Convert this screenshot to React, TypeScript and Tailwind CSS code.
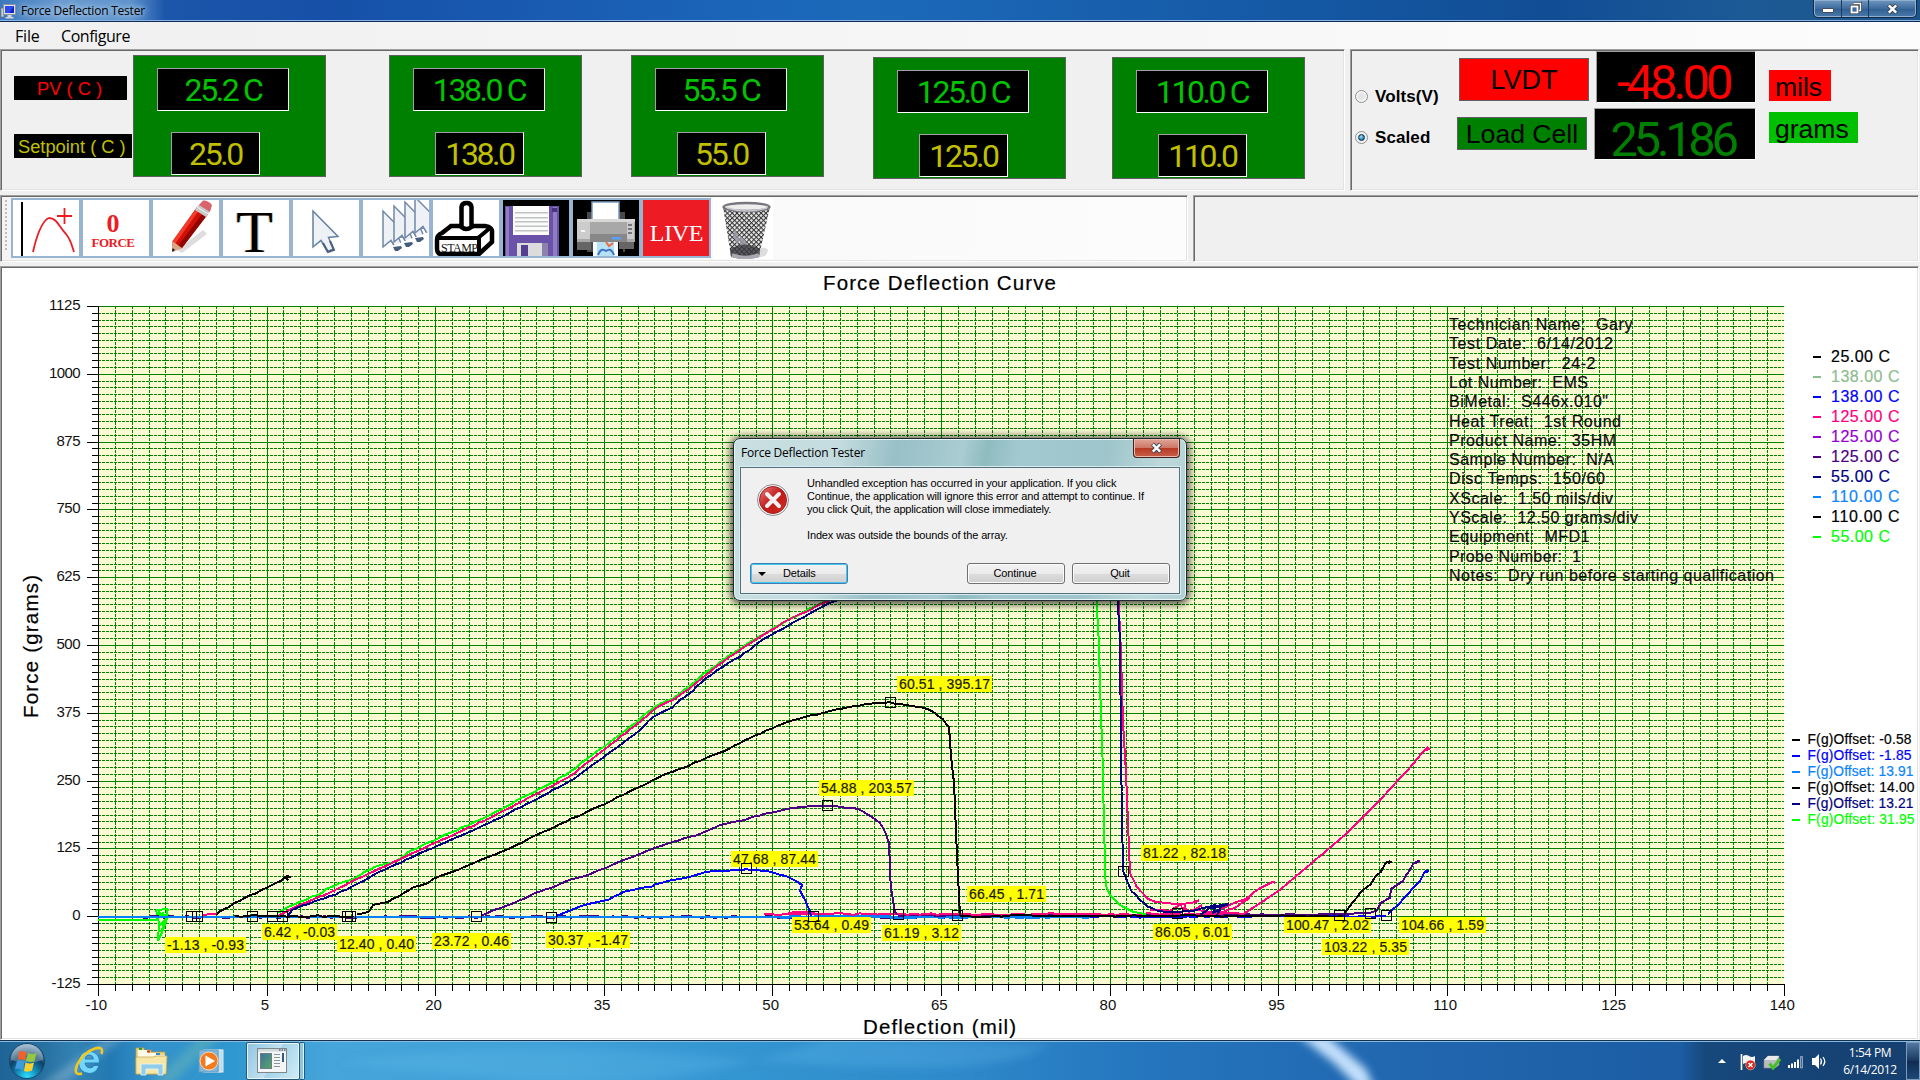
import React from "react";

type Pt = [number, number];

const SUNKEN =
  "border border-t-[#a0a0a0] border-l-[#a0a0a0] border-b-white border-r-white shadow-[inset_1px_1px_0_#696969,inset_-1px_-1px_0_#e3e3e3]";
const LCD_BOX =
  "border border-t-[#a0a0a0] border-l-[#a0a0a0] border-b-white border-r-white bg-black flex items-center justify-center";

/* ---------- Title bar and menu ---------- */

function TitleBar() {
  return (
    <div className="relative flex h-[22px] shrink-0 items-start justify-between overflow-hidden border-b border-[#122b55] bg-[linear-gradient(90deg,#3c78bc_0,#6b9bd0_60px,#5f93cc_130px,#1c56aa_165px,#1650a8_320px,#1b66b9_760px,#1c68b8_900px,#155aa6_1250px,#114d95_1550px,#1c5a96_1750px,#1d5488_1920px)] shadow-[inset_0_-1px_0_#86b4e4]">
      <div className="flex h-[21px] items-center pl-[1px]">
        <svg width="15" height="16" viewBox="0 0 15 16">
          <rect x="0" y="5" width="3" height="9" fill="#c9d0c4" stroke="#667" strokeWidth=".6" />
          <rect x="2.5" y="1.5" width="12" height="10" fill="#dfe3e8" stroke="#8a93a0" />
          <rect x="4" y="3" width="9" height="7" fill="#1423c8" />
          <path d="M4 3h9L8 10H4z" fill="#2f49ee" />
          <path d="M6.500 12h4v2h2v1.500h-8V14h2z" fill="#cfd4da" />
        </svg>
        <span className="ml-[5px] font-['Open_Sans'] text-[12px] leading-[20px] tracking-[-0.22px] text-black [text-shadow:0_0_6px_#bcd6f0,0_0_6px_#bcd6f0]">
          Force Deflection Tester
        </span>
      </div>
      <div className="mr-[3px] flex h-[18px] w-[104px] overflow-hidden rounded-b-[5px] border border-t-0 border-[#12294a] bg-[linear-gradient(180deg,#6f97bf,#3f6c9e_50%,#2f5f93_51%,#4a7bab)] shadow-[inset_0_0_0_1px_#8fb0d0]">
        <div className="flex w-[28px] items-center justify-center border-r border-[#1d3b62] pt-[3px]">
          <div className="h-[5px] w-[12px] rounded-[1px] border border-[#454b57] bg-white" />
        </div>
        <div className="flex w-[27px] items-center justify-center border-r border-[#1d3b62]">
          <svg width="13" height="13" viewBox="0 0 13 13">
            <path d="M4.500 1.500h7v7h-2" fill="none" stroke="#3b4250" strokeWidth="3" />
            <path d="M4.500 1.500h7v7h-2" fill="none" stroke="#fff" strokeWidth="1.400" />
            <rect x="2.500" y="4.500" width="6" height="6" fill="#3f6c9e" stroke="#3b4250" strokeWidth="3.200" />
            <rect x="2.500" y="4.500" width="6" height="6" fill="#3f6c9e" stroke="#fff" strokeWidth="1.800" />
          </svg>
        </div>
        <div className="flex flex-1 items-center justify-center">
          <CloseX />
        </div>
      </div>
    </div>
  );
}

function CloseX() {
  return (
    <svg width="13" height="12" viewBox="0 0 13 12">
      <path d="M2.500 2l8 8M10.500 2l-8 8" stroke="#3d4452" strokeWidth="4.200" />
      <path d="M2.800 2.300l7.400 7.400M10.200 2.300L2.800 9.700" stroke="#fff" strokeWidth="2.400" />
    </svg>
  );
}

function MenuBar() {
  return (
    <div className="flex h-[27px] shrink-0 items-center bg-[linear-gradient(90deg,#f0f0f0,#fcfcfc)] pl-[15px] pt-px font-['Open_Sans'] text-[16px] text-black">
      <span className="w-[46px] tracking-[-0.2px]">File</span>
      <span className="tracking-[-0.45px]">Configure</span>
    </div>
  );
}

/* ---------- Readouts ---------- */

function Gauge({ pv, sp, cls, spCls }: { pv: string; sp: string; cls: string; spCls: string }) {
  return (
    <div className={`h-[122px] w-[193px] shrink-0 border border-[#606060] bg-[#008000] pt-[12px] ${cls}`}>
      <div className={`ml-[23px] h-[43px] w-[132px] ${LCD_BOX}`}>
        <span className="whitespace-nowrap font-[Roboto] text-[32px] leading-none tracking-[-2.4px] text-[#00c400]">{pv}</span>
      </div>
      <div className={`mt-[21px] h-[43px] w-[89px] ${LCD_BOX} ${spCls}`}>
        <span className="font-[Roboto] text-[32px] leading-none tracking-[-2.4px] text-[#c0c000]">{sp}</span>
      </div>
    </div>
  );
}

function Radio({ label, on }: { label: string; on?: boolean }) {
  return (
    <div className="flex h-[20px] items-center">
      <div className="flex h-[13px] w-[13px] items-center justify-center rounded-full border border-[#8e8f8f] bg-[radial-gradient(circle,#e4e4e4_30%,#fbfbfb_80%)] shadow-[inset_0_0_0_1px_#f4f4f4]">
        {on && <div className="h-[7px] w-[7px] rounded-full border border-[#0b3350] bg-[radial-gradient(circle_at_40%_35%,#a8e2f8,#1c78b0_70%)]" />}
      </div>
      <span className="ml-[7px] pt-px font-['Liberation_Sans'] text-[17px] font-bold leading-[20px] tracking-[0.1px] text-black">{label}</span>
    </div>
  );
}

function ReadoutRow() {
  return (
    <div className="flex h-[142px] shrink-0 gap-[5px]">
      <div className={`flex w-[1345px] bg-[#f0f0f0] ${SUNKEN}`}>
        <div className="w-[132px] pl-[13px] pt-[26px] font-['Liberation_Sans'] text-[18.3px]">
          <div className="h-[24px] w-[113px] bg-black pl-[23px] leading-[25px] text-[#ff0000]">PV ( C )</div>
          <div className="mt-[34px] h-[24px] w-[118px] whitespace-nowrap bg-black pl-[4px] leading-[25px] text-[#c0c000]">Setpoint ( C )</div>
        </div>
        <Gauge pv="25.2 C" sp="25.0" cls="mt-[5px]" spCls="ml-[37px]" />
        <Gauge pv="138.0 C" sp="138.0" cls="mt-[5px] ml-[63px]" spCls="ml-[45px]" />
        <Gauge pv="55.5 C" sp="55.0" cls="mt-[5px] ml-[49px]" spCls="ml-[45px]" />
        <Gauge pv="125.0 C" sp="125.0" cls="mt-[7px] ml-[49px]" spCls="ml-[45px]" />
        <Gauge pv="110.0 C" sp="110.0" cls="mt-[7px] ml-[46px]" spCls="ml-[45px]" />
      </div>
      <div className={`flex w-[569px] bg-[#f0f0f0] ${SUNKEN}`}>
        <div className="flex w-[106px] flex-col gap-[21px] pl-[4px] pt-[36px]">
          <Radio label="Volts(V)" />
          <Radio label="Scaled" on />
        </div>
        <div className="flex w-[132px] flex-col gap-[16px] pt-[8px] font-['Liberation_Sans'] text-[27px] text-black">
          <div className="ml-[2px] flex h-[43px] w-[130px] items-center justify-center border border-[#606060] bg-[#ff0000] pt-[2px]">LVDT</div>
          <div className="flex h-[33px] w-[130px] items-center justify-center border border-[#606060] bg-[#008000] pt-[3px] text-[26.6px]">Load Cell</div>
        </div>
        <div className="ml-[5px] flex w-[162px] flex-col items-end gap-[5px] pt-px">
          <div className={`h-[52px] w-[160px] ${LCD_BOX}`}>
            <span className="mt-[11px] pr-[5px] font-[Roboto] text-[49px] leading-none tracking-[-4px] text-[#ff0000]">-48.00</span>
          </div>
          <div className={`h-[52px] w-[162px] ${LCD_BOX}`}>
            <span className="mt-[11px] pr-[5px] font-[Roboto] text-[49px] leading-none tracking-[-4.4px] text-[#008000]">25.186</span>
          </div>
        </div>
        <div className="ml-[13px] flex flex-col items-start gap-[11px] pt-[20px] font-['Liberation_Sans'] text-[26.5px] leading-[34px]">
          <div className="h-[31px] w-[62px] bg-[#ff0000] pl-[6px]">mils</div>
          <div className="h-[31px] w-[89px] bg-[#00c000] pl-[6px]">grams</div>
        </div>
      </div>
    </div>
  );
}

/* ---------- Toolbar ---------- */

function ToolButton({ children, bg = "bg-white" }: { children: React.ReactNode; bg?: string }) {
  return <div className={`h-[60px] w-[70px] shrink-0 border-2 border-[#99b4d1] ${bg}`}>{children}</div>;
}

const ARROW = "M0 0L0 36L8 29.500L14.500 40.500L20.500 38L15.500 26.500L25 25.500Z";

function CurveIcon() {
  return (
    <svg width="66" height="56" viewBox="0 0 66 56">
      <path d="M9 2v54" stroke="#000" strokeWidth="2" />
      <path d="M20 52C23 38 29 20 36 18C44 18 46 27 53 34C58 40 59 46 61 52" fill="none" stroke="#ed1c24" strokeWidth="1.800" />
      <path d="M44 16h15M51.500 8v16" stroke="#ed1c24" strokeWidth="1.800" />
    </svg>
  );
}

function PencilIcon() {
  return (
    <svg width="66" height="56" viewBox="0 0 66 56">
      <path d="M24 50L50 30L54 34L29 53z" fill="#ddd" />
      <path d="M20 51L19 42L44 7L55 14L29 48z" fill="#d01008" />
      <path d="M19 42L44 7L47 9L22 44z" fill="#f43a2a" />
      <path d="M25 46L51 11.500L55 14L29 48z" fill="#8f0500" />
      <path d="M19 41L29 48L20 52z" fill="#d9a987" />
      <path d="M19.500 48L22 50L19 52z" fill="#111" />
      <path d="M42 10L46 4L57 11L53 17z" fill="#c9c9c9" />
      <path d="M46 5L50 0.500Q55 0 59 5L57 12z" fill="#d9656c" />
      <path d="M44 7L55 14" stroke="#f4f4f4" />
    </svg>
  );
}

function PointerIcon() {
  return (
    <svg width="66" height="56" viewBox="0 0 66 56">
      <path d={ARROW} transform="translate(20 11)" fill="#eef1f6" stroke="#66809f" strokeWidth="1.500" />
      <path d="M30 43l5 9l6-2l-4-9" fill="none" stroke="#49607f" strokeWidth="2" />
    </svg>
  );
}

function MultiPointerIcon() {
  return (
    <svg width="66" height="56" viewBox="0 0 66 56">
      {[[20, 11], [31, 6], [42, 2], [52, -3]].map(([x, y], i) => (
        <g key={i}>
          <path d={ARROW} transform={`translate(${x} ${y})`} fill="#eef1f6" stroke="#7188a6" strokeWidth="1.500" />
        </g>
      ))}
      <path d="M26 47L66 32V56H26z" fill="#fff" />
      {[[30, 47], [41, 43], [52, 38]].map(([x, y], i) => (
        <path key={i} d={`M${x} ${y}l2 4h3l4-3l-1-2z`} fill="#465c7c" />
      ))}
    </svg>
  );
}

function StampIcon() {
  return (
    <svg width="66" height="56" viewBox="0 0 66 56">
      <path d="M4 40Q4 35 9 33L18 26H52Q60 27 59 33V42L46 54H8Q4 54 4 48z" fill="#fff" stroke="#000" strokeWidth="4.500" />
      <path d="M5 38H45L57 28M46 38V54" fill="none" stroke="#000" strokeWidth="4" />
      <path d="M28.500 27V7Q29 3 33.500 3Q38 3 38.500 7V27Q33 31 28.500 27z" fill="#fff" stroke="#000" strokeWidth="4.500" />
      <text x="8" y="52" fontFamily="Liberation Serif" fontSize="12" textLength="37" fill="#111">STAMP</text>
    </svg>
  );
}

function FloppyIcon() {
  return (
    <svg width="66" height="56" viewBox="0 0 66 56">
      <path d="M2 6H56V56H2z" fill="#6a52a8" />
      <path d="M3 7H6V56H3zM50 7h4V56h-4z" fill="#8f7cc4" />
      <path d="M49 8h5v4h-5z" fill="#473580" />
      <rect x="10" y="6" width="36" height="29" fill="#fbfbfb" />
      {[12, 17, 21, 25.5, 30].map((y) => <rect key={y} x="12" y={y} width="33" height="1.500" fill="#bfc3c3" />)}
      <path d="M14 43h31v13H14z" fill="#dcdcdc" />
      <path d="M39 43h6v13h-6z" fill="#8c81ac" />
      <rect x="18" y="45" width="7" height="11" fill="#54408f" />
    </svg>
  );
}

function PrinterIcon() {
  return (
    <svg width="66" height="56" viewBox="0 0 66 56">
      <path d="M14 12h38v40H14z" fill="#4a4a4a" />
      <path d="M20 40h30v16H20z" fill="#000" />
      <path d="M4 34h14v16H4zM46 34h15v15H46z" fill="#666" />
      <path d="M19 2h27v20H19z" fill="#fff" stroke="#7a9ac0" strokeWidth="1.500" />
      <path d="M4 19h58v23H4z" fill="#a8a8a8" />
      <path d="M4 19h58v3H4z" fill="#d8d8d8" />
      <path d="M4 22h13v17H4zM54 22h7v17h-7z" fill="#ccc" />
      <path d="M17 34h37v8H17z" fill="#888" />
      <path d="M39 37h9v2.500h-9z" fill="#5aa0ff" />
      {[24, 28, 32].map((y) => <rect key={y} x="55" y={y} width="4" height="2" fill="#777" />)}
      <rect x="8" y="30" width="4" height="2" fill="#f6f6f6" />
      <path d="M20 42h25v14H20z" fill="#f5faff" />
      <path d="M24 42h17v14H24z" fill="#b6e2f6" />
      <path d="M33 42l3 4l4-3" fill="none" stroke="#f06a3c" strokeWidth="2" />
      <path d="M25 55q3-8 8-4q5-4 8 4" fill="none" stroke="#3e74c8" strokeWidth="2" />
    </svg>
  );
}

function TrashIcon() {
  return (
    <svg width="60" height="61" viewBox="0 0 60 61">
      <defs>
        <pattern id="mesh" width="3.400" height="3.400" patternUnits="userSpaceOnUse" patternTransform="rotate(45)">
          <rect width="3.400" height="3.400" fill="#ececec" />
          <path d="M0 0h3.400M0 0v3.400" stroke="#333" strokeWidth="2" />
        </pattern>
      </defs>
      <path d="M46 50q14-2 6 8l-8 2z" fill="#ddd" />
      <path d="M10 9Q34 17 57 9L46 58Q32 63 18 58z" fill="url(#mesh)" />
      <path d="M22 30l5 12l-3 4l-4-8zM27 37l6 6l2 8l-8-3z" fill="#9a9aa4" opacity=".85" />
      <path d="M17 51Q32 42 47 51L46 59Q32 63 18 59z" fill="#3a3a3e" opacity=".8" />
      <path d="M19 57Q32 62 46 57" fill="none" stroke="#a8a8b2" strokeWidth="3.500" />
      <ellipse cx="33.500" cy="9" rx="23" ry="4" fill="#eee" stroke="#77777f" strokeWidth="2.400" />
      <path d="M14 10Q33 16 54 10" stroke="#c8c8d0" strokeWidth="1.500" fill="none" />
    </svg>
  );
}

function ToolRow() {
  return (
    <div className="mt-[4px] flex h-[67px] shrink-0 gap-[5px]">
      <div className={`flex w-[1188px] items-start bg-[linear-gradient(90deg,#f4f4f4,#fcfcfc)] pl-[4px] pt-[2px] ${SUNKEN}`}>
        <div className="mr-[4px] mt-[2px] flex w-[2px] flex-col gap-[2px]">
          {Array.from({ length: 13 }, (_, i) => <div key={i} className="h-[2px] w-[2px] bg-[#bdbdbd]" />)}
        </div>
        <ToolButton><CurveIcon /></ToolButton>
        <ToolButton>
          <div className="flex flex-col items-center pr-[6px] pt-[11px] font-['Liberation_Serif'] font-bold text-[#ed1c24]">
            <span className="text-[26px] leading-[25px]">0</span>
            <span className="text-[13px] leading-[14px] tracking-[-0.5px]">FORCE</span>
          </div>
        </ToolButton>
        <ToolButton><PencilIcon /></ToolButton>
        <ToolButton>
          <div className="flex justify-center pr-[3px] font-['Liberation_Serif'] text-[60px] leading-[64px] text-black [text-shadow:-1px_0_0_#f9b26a,1px_0_0_#7cc4f8]">T</div>
        </ToolButton>
        <ToolButton><PointerIcon /></ToolButton>
        <ToolButton><MultiPointerIcon /></ToolButton>
        <ToolButton><StampIcon /></ToolButton>
        <ToolButton bg="bg-black"><FloppyIcon /></ToolButton>
        <ToolButton bg="bg-black"><PrinterIcon /></ToolButton>
        <ToolButton bg="bg-[#ed1c24]">
          <div className="pl-px pt-[17px] text-center font-['Liberation_Serif'] text-[24px] leading-[33px] tracking-[-0.3px] text-white">LIVE</div>
        </ToolButton>
        <div className="ml-[2px] h-[61px] w-[60px] bg-white"><TrashIcon /></div>
      </div>
      <div className={`w-[726px] bg-[#f0f0f0] ${SUNKEN}`} />
    </div>
  );
}

/* ---------- Chart ---------- */

const SX = 11.24;
const SY = 0.5424;
const px = (v: number) => 98 + (v + 10) * SX;
const py = (v: number) => 984 - (v + 125) * SY;

// Breaks each segment into short steps with a small deterministic sensor jitter.
function rough(points: Pt[], amp = 0.8, step = 6): string {
  let seed = points.length * 37 + Math.round(points[0][0]);
  const rnd = () => {
    seed = (seed * 1103515245 + 12345) & 0x7fffffff;
    return (seed / 0x7fffffff - 0.5) * 2 * amp;
  };
  const out: string[] = [];
  for (let i = 0; i < points.length - 1; i++) {
    const [x0, y0] = points[i];
    const [x1, y1] = points[i + 1];
    const n = Math.max(1, Math.round(Math.hypot(x1 - x0, y1 - y0) / step));
    const steep = Math.abs(y1 - y0) > Math.abs(x1 - x0) * 2;
    for (let k = 0; k < n; k++) {
      const t = k / n;
      const j = k === 0 || steep ? 0 : rnd();
      out.push(`${(x0 + (x1 - x0) * t).toFixed(1)},${(y0 + (y1 - y0) * t + j).toFixed(1)}`);
    }
  }
  out.push(points[points.length - 1].join(","));
  return out.join(" ");
}

interface Curve { color: string; pts: Pt[]; w?: number; amp?: number }

const CURVES: Curve[] = [
  { color: "#00ff00", pts: [[98, 920], [157, 920]], amp: 0 },
  { color: "#00ff00", amp: 0, pts: [[157, 920], [159, 910], [161, 918], [163, 912], [165, 919], [168, 909], [156, 910], [159, 923], [158, 941], [164, 928], [167, 918], [160, 925], [166, 921], [161, 932], [168, 914]] },
  { color: "#4b0082", pts: [[140, 917], [900, 917]], amp: 1.2 },
  { color: "#0080ff", pts: [[98, 917], [964, 917]], amp: 0.3 },
  { color: "#ff0080", pts: [[203, 915], [217, 914]], amp: 1.4 },
  { color: "#000000", pts: [[235, 916], [354, 916.500]], amp: 1.2 },
  { color: "#0000ff", pts: [[780, 918], [1386, 916]], amp: 0.8 },
  { color: "#0080ff", pts: [[780, 917], [1090, 917]], amp: 0.4, w: 3 },
  { color: "#4b0082", pts: [[898, 915.500], [1310, 914.500], [1340, 914], [1370, 912.700], [1376, 911]], amp: 0.5 },
  { color: "#ff0080", pts: [[764, 914], [1243, 914]], amp: 0.9 },
  { color: "#ff0080", pts: [[785, 914], [800, 911.500], [815, 913]], amp: 0.5 },
  { color: "#000000", pts: [[960, 916], [1343, 916]], amp: 0.8 },
  { color: "#000000", pts: [[217, 915], [219, 911.700], [245, 897.700], [267, 887.700], [281, 881], [285, 877], [288, 880], [286, 876], [291, 877]] },
  { color: "#000000", pts: [[357, 914], [369, 911.700], [373, 905], [388, 902], [404, 892.700], [414, 887], [428, 883], [433, 879], [453, 871.700], [465, 866.700], [486, 858], [506, 850], [560, 824], [600, 806], [640, 786.700], [653, 780], [663, 775], [683, 768], [706, 758], [723, 751.700], [740, 743], [756, 735], [771, 729], [790, 721], [806, 716.700], [823, 713], [840, 709], [866, 704], [890, 702.300], [906, 705], [923, 707.700], [933, 711.700], [943, 719], [949, 727], [951, 756], [954, 783], [957, 856], [960, 916]], amp: 0.6 },
  { color: "#4b0082", pts: [[481, 915.700], [494, 910], [504, 906.700], [518, 901], [535, 893], [551, 888], [569, 880], [588, 875], [612, 865], [640, 854], [653, 848.700], [673, 841.700], [700, 834], [720, 825], [740, 821], [753, 816.700], [770, 813], [783, 810], [800, 807], [816, 805.700], [840, 806.700], [858, 809], [870, 816], [880, 823], [885, 831.700], [889, 843], [890.700, 886.700], [895, 911.700], [897, 915]], amp: 0.5 },
  { color: "#0000ff", pts: [[557, 915.700], [569, 911], [588, 904], [608, 900], [624, 891.700], [640, 888.300], [651, 887], [656, 884], [673, 880], [690, 876.700], [706, 872], [726, 871], [746, 869.300], [766, 870.700], [786, 876], [796, 881], [802, 885], [800, 890.700], [805, 900], [810, 911.700], [811, 916]], amp: 0.5 },
  { color: "#00ff00", pts: [[277, 913], [300, 901.700], [318, 895], [326, 889], [351, 880], [375, 866.700], [392, 863], [412, 850], [490, 815], [566, 775], [640, 719], [656, 706], [673, 698.500], [690, 686], [706, 672], [723, 660], [740, 649], [755, 639], [786, 621], [830, 598]], amp: 0.9 },
  { color: "#ff0080", pts: [[279, 915], [302, 904], [334, 890.700], [359, 878], [384, 866.700], [420, 850], [490, 818], [569, 777], [640, 721.700], [656, 708], [673, 700], [690, 688], [706, 675], [723, 661.700], [740, 650], [755, 640], [788, 620], [834, 598]], amp: 0.5 },
  { color: "#000080", pts: [[288, 916], [292, 910], [318, 900], [335, 895], [359, 883], [384, 870], [428, 850], [500, 818], [574, 779], [640, 730], [653, 717], [672, 707.700], [680, 700], [693, 690.700], [706, 678], [723, 666.700], [740, 656.700], [762, 640], [798, 620], [820, 608], [842, 598]], amp: 0.6 },
  { color: "#00ff00", amp: 0.3, pts: [[1096, 590], [1098.700, 640], [1100.700, 706], [1102.700, 763], [1104, 826], [1105.700, 885], [1110, 895], [1120, 905], [1133, 911.700], [1146, 914]] },
  { color: "#ff0080", amp: 0.5, pts: [[1118, 590], [1120.700, 646], [1123, 723], [1126, 773], [1128, 823], [1130, 873], [1136.700, 886.700], [1146.700, 898], [1156, 902], [1180, 904], [1192, 903], [1199, 900], [1195, 903]] },
  { color: "#ff0080", amp: 1, pts: [[1150, 910], [1170, 911], [1184, 904], [1186, 909], [1181, 907], [1190, 911], [1202, 905], [1196, 909], [1213, 911.700], [1230, 905], [1243, 900], [1253, 893], [1263, 886.700], [1273, 881.700], [1275, 883]] },
  { color: "#ff0080", amp: 0.6, pts: [[1213, 914], [1235, 908], [1250, 898]] },
  { color: "#000080", amp: 0.5, pts: [[1117, 590], [1120, 640], [1121, 750], [1122, 826], [1123.300, 871.700], [1128, 883], [1131.700, 891.700], [1135, 894], [1140, 900], [1148, 906.700], [1158, 911], [1176, 912.300], [1193, 911], [1213, 906], [1228, 904.300]] },
  { color: "#000080", amp: 1, pts: [[1200, 915], [1206, 911], [1211, 906], [1216, 905], [1213, 913], [1220, 909], [1217, 915], [1222, 905], [1229, 904], [1210, 908]] },
  { color: "#ff0080", amp: 0.3, pts: [[1243, 914], [1253, 907.700], [1280, 890], [1313, 862], [1346, 834], [1380, 800], [1413, 764], [1423, 751.700], [1428, 747], [1426, 750], [1430, 749]] },
  { color: "#000000", amp: 0.5, pts: [[1345, 912.700], [1361, 891.700], [1371, 884], [1375, 877], [1381, 871.700], [1386, 862.700], [1390, 861], [1388, 863], [1392, 862]] },
  { color: "#4b0082", amp: 0.5, pts: [[1376, 911.700], [1381, 903], [1390, 897.700], [1391, 889], [1403, 881], [1413, 864], [1418, 861], [1416, 863], [1420, 860.700]] },
  { color: "#0000ff", amp: 0.5, pts: [[1388, 914], [1400, 903], [1413, 887.700], [1420, 881], [1425, 871.700], [1428, 870], [1426, 872], [1429, 871]] },
];

const MARKERS: Pt[] = [
  [191, 916.500], [197, 916.500], [252.500, 916.500], [272.500, 916.500], [282.500, 916.500], [347.500, 916.500], [350, 916.500],
  [476.500, 916.500], [551.500, 917.500], [746.500, 868.500], [827.500, 805.500], [813.500, 916.500], [898.500, 914.500], [890.500, 702.500],
  [957.500, 915.500], [1123.500, 871.500], [1177.500, 913.500], [1339.500, 915.500], [1370.500, 913.500], [1386.500, 915.500],
];

const TAGS: [string, number, number, number][] = [
  ["-1.13 , -0.93", 165, 937, 81],
  ["6.42 , -0.03", 262, 924, 75],
  ["12.40 , 0.40", 337, 936, 79],
  ["23.72 , 0.46", 432, 933, 79],
  ["30.37 , -1.47", 546, 932, 84],
  ["60.51 , 395.17", 897, 676, 95],
  ["54.88 , 203.57", 819, 780, 95],
  ["47.68 , 87.44", 731, 851, 87],
  ["53.64 , 0.49", 792, 917, 79],
  ["61.19 , 3.12", 882, 925, 79],
  ["66.45 , 1.71", 967, 886, 79],
  ["81.22 , 82.18", 1141, 845, 87],
  ["86.05 , 6.01", 1153, 924, 79],
  ["100.47 , 2.02", 1284, 917, 87],
  ["103.22 , 5.35", 1322, 939, 87],
  ["104.66 , 1.59", 1399, 917, 87],
];

const INFO: [string, number][] = [
  ["Technician Name:\u00a0 Gary", 183.5],
  ["Test Date:\u00a0 6/14/2012", 164],
  ["Test Number:\u00a0 24-2", 146.500],
  ["Lot Number:\u00a0 EMS", 139],
  ["BiMetal:\u00a0 S446x.010\"", 159],
  ["Heat Treat:\u00a0 1st Round", 172],
  ["Product Name:\u00a0 35HM", 167],
  ["Sample Number:\u00a0 N/A", 165],
  ["Disc Temps:\u00a0 150/60", 156],
  ["XScale:\u00a0 1.50 mils/div", 164],
  ["YScale:\u00a0 12.50 grams/div", 189],
  ["Equipment:\u00a0 MFD1", 140.500],
  ["Probe Number:\u00a0 1", 132],
  ["Notes:\u00a0 Dry run before starting qualification", 325],
];

const LEGEND: [string, string][] = [
  ["25.00 C", "#000000"],
  ["138.00 C", "#8fbc8f"],
  ["138.00 C", "#0000ff"],
  ["125.00 C", "#ff0080"],
  ["125.00 C", "#9400d3"],
  ["125.00 C", "#4b0082"],
  ["55.00 C", "#000080"],
  ["110.00 C", "#0a84ff"],
  ["110.00 C", "#000000"],
  ["55.00 C", "#00ff00"],
];

const OFFSETS: [string, string, number][] = [
  ["F(g)Offset: -0.58", "#000000", 104],
  ["F(g)Offset: -1.85", "#0000ff", 104],
  ["F(g)Offset: 13.91", "#0a84ff", 106],
  ["F(g)Offset: 14.00", "#000000", 107],
  ["F(g)Offset: 13.21", "#000080", 106],
  ["F(g)Offset: 31.95", "#00ff00", 107],
];

function Chart() {
  const cols = Array.from({ length: 100 }, (_, i) => i);
  const rows = Array.from({ length: 101 }, (_, i) => i);
  return (
    <div className={`mt-[4px] h-[774px] w-[1919px] shrink-0 bg-white p-px ${SUNKEN}`}>
      <svg width="1915" height="770" viewBox="2 268 1915 770" fontFamily="Liberation Sans" className="block">
        <rect x="98" y="306" width="1686" height="678" fill="#fafad2" />
        <g stroke="#008000" strokeWidth="1" shapeRendering="crispEdges">
          {cols.map((i) => {
            const x = Math.round(px(-10 + i * 1.5)) + 0.5;
            return <line key={i} x1={x} x2={x} y1="306" y2="984" strokeDasharray={i % 10 ? "3 1" : undefined} />;
          })}
          {rows.map((i) => {
            const y = Math.round(py(1125 - i * 12.5)) + 0.5;
            return <line key={i} x1="98" x2="1784" y1={y} y2={y} strokeDasharray={i % 10 ? "3 1" : undefined} />;
          })}
        </g>
        <g stroke="#000" strokeWidth="1" shapeRendering="crispEdges">
          <path d="M98.500 306V984M98 984.500H1785" />
          {Array.from({ length: 101 }, (_, i) => {
            const x = Math.round(px(-10 + i * 1.5)) + 0.5;
            const y = Math.round(py(1125 - i * 12.5)) + 0.5;
            return (
              <g key={i}>
                <line x1={x} x2={x} y1="984" y2={i % 10 ? 991 : 996} />
                <line y1={y} y2={y} x1={i % 10 ? 92 : 87} x2="98" />
              </g>
            );
          })}
        </g>
        <g fill="#111" fontSize="15">
          {Array.from({ length: 11 }, (_, i) => (
            <g key={i}>
              <text x="80.500" y={Math.round(py(1125 - i * 125)) + 4} textAnchor="end" textLength={[31.5, 31.5, 24, 24, 24, 24, 24, 24, 24, 7.8, 29][i]}>{1125 - i * 125}</text>
              <text x={px(-10 + i * 15) - 1.7} y="1010" textAnchor="middle">{-10 + i * 15}</text>
            </g>
          ))}
        </g>
        <g fill="#000" stroke="#000" strokeWidth=".2" fontSize="20.500">
          <text x="823" y="289.500" textLength="233">Force Deflection Curve</text>
          <text x="863" y="1034" textLength="153">Deflection (mil)</text>
          <text transform="translate(37.500 718) rotate(-90)" textLength="143">Force (grams)</text>
        </g>
        <g fill="none" strokeWidth="2" strokeLinejoin="bevel" shapeRendering="crispEdges">
          {CURVES.map((c, i) => (
            <polyline key={i} points={rough(c.pts, c.amp ?? 0.7)} stroke={c.color} strokeWidth={c.w} />
          ))}
        </g>
        <g fontSize="14">
          {TAGS.map(([t, x, y, w]) => (
            <g key={t}>
              <rect x={x} y={y} width={w} height="16" fill="#ffff00" />
              <text x={x + 2} y={y + 12.5} textLength={w - 4} fill="#1a1a00" stroke="#1a1a00" strokeWidth=".2">{t}</text>
            </g>
          ))}
        </g>
        <g fill="none" stroke="#000" shapeRendering="crispEdges">
          {MARKERS.map(([x, y], i) => <rect key={i} x={x - 5} y={y - 5} width="10" height="10" />)}
        </g>
        <g fontSize="16" fill="#0a0a0a" stroke="#0a0a0a" strokeWidth=".2">
          {INFO.map(([t, w], i) => <text key={i} x="1449" y={330 + i * 19.3} textLength={w}>{t}</text>)}
        </g>
        <g fontSize="16" strokeWidth=".2">
          {LEGEND.map(([t, c], i) => (
            <g key={i} fill={c} stroke={c}>
              <rect x="1813" y={356 + i * 20} width="8" height="2" stroke="none" />
              <text x="1831" y={362 + i * 20} textLength={t.length > 7 ? 68.5 : 59}>{t}</text>
            </g>
          ))}
        </g>
        <g fontSize="13.800" strokeWidth=".2">
          {OFFSETS.map(([t, c, w], i) => (
            <g key={i} fill={c} stroke={c}>
              <rect x="1792" y={739 + i * 16} width="8" height="2" stroke="none" />
              <text x="1807.500" y={744 + i * 16} textLength={w}>{t}</text>
            </g>
          ))}
        </g>
      </svg>
    </div>
  );
}

/* ---------- Error dialog ---------- */

function DialogButton({ label, focus }: { label: string; focus?: boolean }) {
  return (
    <div
      className={`flex h-[21px] w-[98px] items-center rounded-[3px] border bg-[linear-gradient(180deg,#f2f2f2,#ebebeb_50%,#dddddd_51%,#cfcfcf)] ${
        focus ? "border-[#3c7fb1] shadow-[inset_0_0_0_1px_#48c4f0]" : "border-[#707070] shadow-[inset_0_0_0_1px_#fcfcfc]"
      }`}
    >
      {focus && <div className="ml-[7px] h-0 w-0 border-x-[4px] border-t-[4px] border-x-transparent border-t-black" />}
      <span className={`text-[11px] tracking-[-0.15px] ${focus ? "ml-[17px]" : "flex-1 pr-[2px] text-center"}`}>{label}</span>
    </div>
  );
}

function ErrorDialog() {
  return (
    <div className="absolute left-[733px] top-[438px] flex h-[163px] w-[454px] flex-col rounded-[7px] border border-[#1d2b30] bg-[linear-gradient(100deg,#c9dfe2_0,#c4dcdf_22%,#98c0c6_34%,#a8ccd2_48%,#8fbcbf_53%,#a3c9d0_60%,#9dc5ca_78%,#bcd8db_90%,#b0d0d4)] pb-[6px] shadow-[inset_0_0_0_1px_#e6f4f6,0_1px_9px_2px_rgba(0,0,0,.75)]">
      <div className="flex h-[28px] shrink-0 items-start justify-between pl-[7px] pr-[6px]">
        <span className="font-['Open_Sans'] text-[12px] leading-[28px] tracking-[-0.22px] text-black">Force Deflection Tester</span>
        <div className="flex h-[19px] w-[47px] items-center justify-center rounded-b-[4px] border border-t-0 border-[#43201c] bg-[linear-gradient(180deg,#dfa79b,#cf7766_48%,#b83a24_52%,#c7604a)] shadow-[inset_0_0_0_1px_#e9b9ae]">
          <CloseX />
        </div>
      </div>
      <div className="mx-[6px] flex flex-1 flex-col border border-[#54707a] bg-[#f0f0f0] font-['Liberation_Sans'] text-[11px] leading-[13px] text-black shadow-[0_0_0_1px_#d8ecef]">
        <div className="flex">
          <svg className="ml-[16px] mt-[16px] shrink-0" width="32" height="32" viewBox="0 0 32 32">
            <defs>
              <linearGradient id="err" x1="0" y1="0" x2="1" y2="1">
                <stop offset="0" stopColor="#e98080" />
                <stop offset=".5" stopColor="#c01818" />
                <stop offset="1" stopColor="#d83020" />
              </linearGradient>
            </defs>
            <circle cx="16" cy="16" r="15.500" fill="#fafafa" stroke="#8d8d8d" />
            <circle cx="16" cy="16" r="13.500" fill="url(#err)" stroke="#a02020" />
            <path d="M10 10l12 12M22 10L10 22" stroke="#f2f2f2" strokeWidth="4" strokeLinecap="round" />
          </svg>
          <div className="ml-[18px] mt-[9px] whitespace-nowrap">
            <p className="tracking-[-0.15px]">Unhandled exception has occurred in your application. If you click</p>
            <p className="tracking-[-0.17px]">Continue, the application will ignore this error and attempt to continue. If</p>
            <p className="tracking-[-0.17px]">you click Quit, the application will close immediately.</p>
            <p className="mt-[13px] tracking-[-0.14px]">Index was outside the bounds of the array.</p>
          </div>
        </div>
        <div className="mt-auto flex justify-between pb-[9px] pl-[9px] pr-[9px]">
          <DialogButton label="Details" focus />
          <div className="flex gap-[7px]">
            <DialogButton label="Continue" />
            <DialogButton label="Quit" />
          </div>
        </div>
      </div>
    </div>
  );
}

/* ---------- Taskbar ---------- */

function StartOrb() {
  return (
    <svg width="38" height="38" viewBox="0 0 38 38">
      <defs>
        <radialGradient id="orb" cx=".5" cy=".95" r=".9">
          <stop offset="0" stopColor="#2ce0ff" />
          <stop offset=".35" stopColor="#1387b4" />
          <stop offset=".65" stopColor="#0c4066" />
          <stop offset="1" stopColor="#7fa4bd" />
        </radialGradient>
      </defs>
      <circle cx="19" cy="19" r="17.500" fill="url(#orb)" stroke="#17466b" />
      <path d="M3 18A16 16 0 0 1 35 18Q19 23 3 18z" fill="#fff" opacity=".28" />
      <path d="M11 9.500q4-1.500 7.500 1L17 18.500q-3-2-7-1z" fill="#f0622a" />
      <path d="M20 11q4 2 8.500 0L26.500 19q-4 2-8.500-.5z" fill="#92c83e" />
      <path d="M9 19q4-1.500 7.500 1L15 28q-3-2-8-1z" fill="#3f9ae0" />
      <path d="M17.500 20.500q4 2 8.500 0L24 28.500q-4 2-8 .5z" fill="#fcd02e" />
    </svg>
  );
}

function IeIcon() {
  return (
    <svg width="30" height="32" viewBox="0 0 30 32">
      <path d="M25.500 18H11q.8 4.800 5 4.800q3 0 4-2.300h5q-2.500 8-10 8Q5 27.500 4.500 17.500Q5 6.500 15 6Q26 7 25.500 18zM11 14H19.500q-.8-4-4.300-4t-4.200 4z" fill="#74d6fa" stroke="#2380bd" strokeWidth="1" />
      <path d="M27.500 9Q30 1 21 3.500Q9 7.500 3 20Q-1 31 8 28.500" fill="none" stroke="#f2c81c" strokeWidth="2.600" />
    </svg>
  );
}

function FolderIcon() {
  return (
    <svg width="34" height="32" viewBox="0 0 34 32">
      <path d="M2 3h8v2h7v2h14v22H2z" fill="#eed584" stroke="#b99a47" strokeWidth=".8" />
      <path d="M4 5h10v3h9v2h8v5H4z" fill="#fffbe8" />
      <path d="M5 3h3v2H5z" fill="#24a02c" />
      <path d="M13 5.500h3v2h-3z" fill="#d03b26" />
      <path d="M22 8h4v2h-4z" fill="#2b8fd8" />
      <path d="M2 12h17l3 -1h11l-1 18H2z" fill="#f7e7a6" stroke="#c9ac58" strokeWidth=".8" />
      <path d="M7 30V19h22v11h-5v-6H12v6z" fill="#8fcdea" stroke="#e9f8ff" strokeWidth=".8" />
    </svg>
  );
}

function PlayerIcon() {
  return (
    <svg width="30" height="28" viewBox="0 0 30 28">
      <rect x="8" y="3" width="17" height="22" fill="#b9d8ea" stroke="#e0f0f8" />
      <rect x="5" y="3" width="17" height="22" fill="#a8cde4" stroke="#dceef8" />
      <rect x="1" y="3" width="19" height="22" fill="#7fb6da" stroke="#5c9cc6" />
      <circle cx="11" cy="14" r="9" fill="#f47a20" stroke="#fcd6ae" />
      <path d="M7.500 8.500L17 14l-9.500 5.500z" fill="#fff" />
    </svg>
  );
}

function AppIcon() {
  return (
    <svg width="30" height="25" viewBox="0 0 30 25">
      <rect x=".5" y=".5" width="29" height="24" fill="#f4f6f6" stroke="#7c888c" />
      <path d="M1 1h28v2.500H1z" fill="#cfd8dc" />
      <path d="M22 1.500h1.500v1H22zM24.500 1.500H26v1h-1.500zM27 1.500h1.500v1H27z" fill="#335" />
      <defs>
        <linearGradient id="appg" x1="0" y1="0" x2="1" y2="1">
          <stop offset="0" stopColor="#3f70a0" />
          <stop offset="1" stopColor="#56a860" />
        </linearGradient>
      </defs>
      <rect x="3.500" y="5.500" width="11" height="15" fill="url(#appg)" stroke="#6a7d88" />
      {[6, 9, 12, 15, 18].map((y) => <rect key={y} x="17" y={y} width="6" height="1" fill="#8b9498" />)}
      <rect x="25" y="5" width="2" height="9" fill="#2f5c86" />
    </svg>
  );
}

function Tray() {
  return (
    <div className="relative flex items-center">
      <svg width="120" height="24" viewBox="0 0 120 24" className="mr-[8px]">
        <path d="M4 14h8L8 10z" fill="#fff" />
        <path d="M27.500 5v16" stroke="#fff" strokeWidth="1.600" />
        <path d="M29 7q3-2 6 0t6 0v8q-3 2-6 0t-6 0z" fill="#f4f4f4" />
        <circle cx="36.500" cy="16" r="4.800" fill="#d8281c" stroke="#f7b9b0" strokeWidth=".6" />
        <path d="M34.500 14l4 4M38.500 14l-4 4" stroke="#fff" strokeWidth="1.500" />
        <path d="M50 11l4-4h11v9l-4 3H50z" fill="#b9bcbe" stroke="#8a8d90" strokeWidth=".6" />
        <path d="M50 11l4-4h11l-3 4z" fill="#e8eaeb" />
        <path d="M55.500 14.500l3.500 4.500l7-9" fill="none" stroke="#46c02a" strokeWidth="3" />
        <path d="M74 16h2v3h-2zM77 14.500h2V19h-2zM80 13h2v6h-2zM83 10.500h2V19h-2z" fill="#fff" />
        <path d="M86.500 7.500h2V19h-2z" fill="#4a6c93" stroke="#c5d5e6" strokeWidth=".6" />
        <path d="M98 9h3l4-4v15l-4-4h-3z" fill="#fff" />
        <path d="M106.500 9.500q2 3 0 6M109 8q3.500 4.500 0 9" fill="none" stroke="#fff" strokeWidth="1.200" />
      </svg>
      <div className="flex w-[56px] flex-col items-center font-['Open_Sans'] text-[12px] leading-[17px] text-white">
        <span className="tracking-[-0.35px]">1:54 PM</span>
        <span className="tracking-[-0.35px]">6/14/2012</span>
      </div>
      <div className="ml-[8px] h-[38px] w-[14px] border border-[#7d9cbd] bg-[linear-gradient(180deg,#5277a0,#16365f_50%,#0f2c52_51%,#1d4878)]" />
    </div>
  );
}

function TaskbarGlow() {
  return (
    <svg className="absolute left-0 top-0" width="1920" height="39" viewBox="0 0 1920 39">
      <defs>
        <filter id="soft" x="-20%" y="-60%" width="140%" height="220%">
          <feGaussianBlur stdDeviation="4" />
        </filter>
      </defs>
      <g filter="url(#soft)">
        <path d="M1298 -6h28l40 34l8 18h-16l-24-24z" fill="#c4e0fc" />
        <path d="M340 22Q520 -6 760 20Q1000 40 1050 4L830 -4Q700 44 560 44z" fill="#74c4f0" opacity=".22" />
        <path d="M40 44L110 -4h14L60 44z" fill="#fff" opacity=".25" />
        <path d="M150 44L200 -4h20L170 44z" fill="#a8dc9c" opacity=".25" />
      </g>
    </svg>
  );
}

function Taskbar() {
  return (
    <div className="relative flex h-[40px] shrink-0 items-center justify-between overflow-hidden border-t border-[#16304f] bg-[linear-gradient(90deg,#1e6497_0,#266f9f_40px,#3382b4_75px,#2279b2_110px,#3492cc_150px,#2f97cf_230px,#46a5da_330px,#3fa0d8_560px,#3294d0_760px,#2f8acb_950px,#2475bd_1150px,#2167b0_1400px,#1c5da4_1680px,#17487c_1705px,#153f6f_1920px)] shadow-[inset_0_1px_0_#86bce0]">
      <TaskbarGlow />
      <div className="relative flex items-center">
        <div className="ml-[8px]"><StartOrb /></div>
        <div className="ml-[28px]"><IeIcon /></div>
        <div className="ml-[30px]"><FolderIcon /></div>
        <div className="ml-[30px]"><PlayerIcon /></div>
        <div className="ml-[18px] flex h-[38px] w-[54px] items-center justify-center rounded-[2px] border border-[#24597f] bg-[linear-gradient(120deg,#8fc4e0,#c4e2f0_50%,#a2d4ea_51%,#d3ecf6)] pr-[2px] shadow-[inset_0_0_0_1px_#e6f5fb]">
          <AppIcon />
        </div>
        <div className="h-[38px] w-[5px] rounded-r-[2px] border border-l-0 border-[#24597f] bg-[#8cc6e3] shadow-[inset_-1px_0_0_#e6f5fb]" />
      </div>
      <Tray />
    </div>
  );
}

export default function App() {
  return (
    <div className="relative flex h-[1080px] w-[1920px] flex-col overflow-hidden bg-[#f0f0f0]">
      <TitleBar />
      <MenuBar />
      <ReadoutRow />
      <ToolRow />
      <Chart />
      <Taskbar />
      <ErrorDialog />
    </div>
  );
}
